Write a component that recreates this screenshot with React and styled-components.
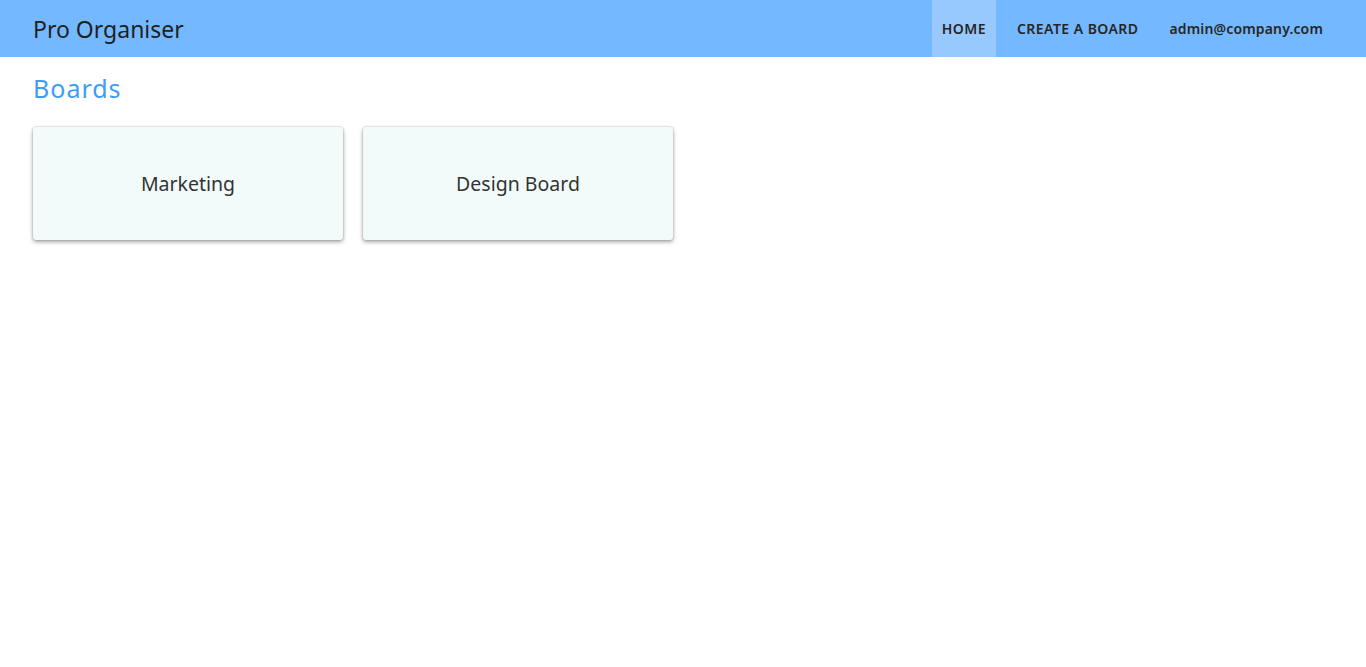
import React from 'react'
import styled, { createGlobalStyle } from 'styled-components'

let Global = createGlobalStyle`
  body {
    margin: 0;
    background: #fff;
    font-family: 'Noto Sans', 'Open Sans', sans-serif;
    color: #333;
  }
`

let Page = styled.div`
  min-height: 100vh;
`

let Nav = styled.nav`
  height: 57px;
  display: flex;
  align-items: stretch;
  justify-content: space-between;
  background-color: #74b9ff;
  padding: 0 33px;
`

let Brand = styled.span`
  display: flex;
  align-items: center;
  font-size: 23px;
  color: #1f1f1f;
`

let Menu = styled.div`
  display: flex;
  align-items: stretch;
`

let MenuItem = styled.a`
  display: flex;
  align-items: center;
  padding: 0 10px;
  margin-left: ${p => (p.first ? 0 : '11px')};
  font-size: 14px;
  font-weight: 600;
  color: #262626;
  letter-spacing: ${p => (p.upper ? '0.45px' : '0.15px')};
  text-decoration: none;
  text-transform: ${p => (p.upper ? 'uppercase' : 'none')};
  background-color: ${p => (p.active ? '#98c9fe' : 'transparent')};
  cursor: pointer;
`

let Main = styled.main`
  padding: 0 33px 24px;
`

let Heading = styled.h1`
  margin: 0;
  padding-top: 16px;
  font-size: 25px;
  font-weight: 400;
  line-height: 30px;
  color: #3d9df6;
  letter-spacing: 1px;
`

let Grid = styled.div`
  display: flex;
  gap: 20px;
  margin-top: 24px;
`

let Card = styled.div`
  width: 310px;
  height: 113px;
  display: flex;
  align-items: center;
  justify-content: center;
  background-color: #f2fbfa;
  border-radius: 3px;
  box-shadow: 0 2px 4px rgba(0, 0, 0, 0.35), 0 0 2px rgba(0, 0, 0, 0.25);
  font-size: 19.5px;
  color: #333;
  cursor: pointer;
`

let boards = [`Marketing`, `Design Board`]

let App = () => (
  <Page>
    <Global />
    <Nav>
      <Brand>Pro Organiser</Brand>
      <Menu>
        <MenuItem first upper active>Home</MenuItem>
        <MenuItem upper>Create a Board</MenuItem>
        <MenuItem>admin@company.com</MenuItem>
      </Menu>
    </Nav>
    <Main>
      <Heading>Boards</Heading>
      <Grid>
        {boards.map(name => <Card key={name}>{name}</Card>)}
      </Grid>
    </Main>
  </Page>
)

export default App
